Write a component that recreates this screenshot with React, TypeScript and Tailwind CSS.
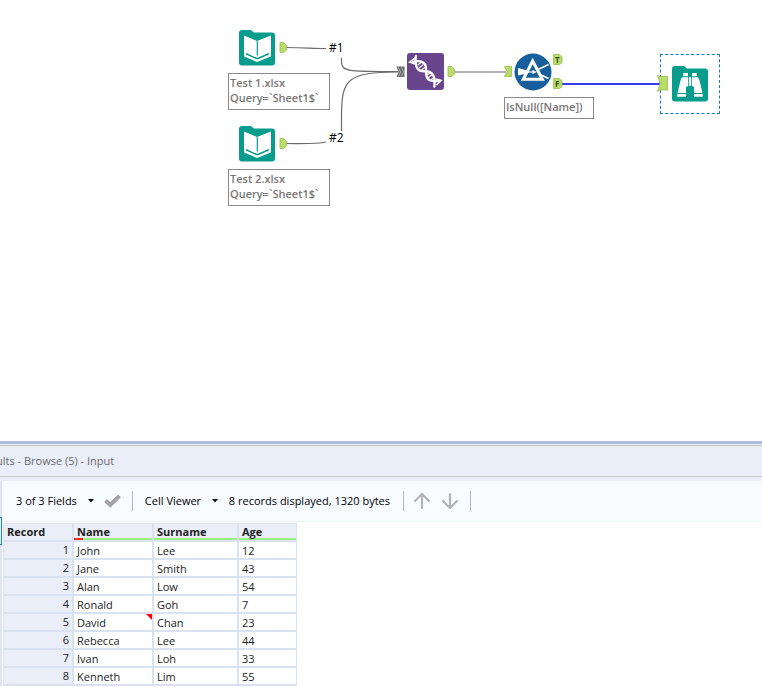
import type { ReactNode } from "react";
import { ArrowDown, ArrowUp } from "lucide-react";

type Person = { name: string; surname: string; age: number; flagged?: boolean };

const people: Person[] = [
  { name: "John", surname: "Lee", age: 12 },
  { name: "Jane", surname: "Smith", age: 43 },
  { name: "Alan", surname: "Low", age: 54 },
  { name: "Ronald", surname: "Goh", age: 7 },
  { name: "David", surname: "Chan", age: 23, flagged: true },
  { name: "Rebecca", surname: "Lee", age: 44 },
  { name: "Ivan", surname: "Loh", age: 33 },
  { name: "Kenneth", surname: "Lim", age: 55 },
];

const FOLDER = "M3 0H12L15 2.5H33Q36 2.5 36 5.5V32.5Q36 35.5 33 35.5H3Q0 35.5 0 32.5V3Q0 0 3 0Z";

function InputIcon() {
  return (
    <svg width="36" height="36" viewBox="0 0 36 36" role="img" aria-label="Input Data">
      <path d={FOLDER} fill="#089c8c" />
      <path d="M5 5.5L18 11L32 5.5V26.5L18 32L5 26.5Z" fill="#fff" />
      <path d="M18.3 11V25.5" stroke="#089c8c" strokeWidth="1.2" />
      <path d="M7 23.8L18.3 28.8L30 23.8" fill="none" stroke="#089c8c" strokeWidth="1.5" />
    </svg>
  );
}

function UnionIcon() {
  return (
    <svg width="37" height="37" viewBox="0 0 37 37" role="img" aria-label="Union">
      <rect width="37" height="37" rx="3" fill="#68458c" />
      <g fill="none" stroke="#fff" strokeWidth="2.3" strokeLinecap="round">
        <path d="M9 3C7.8 8 8.5 15.8 13 17.6C15.5 18.6 17.5 18 20 18.4C26 19.3 28.4 23 27.4 33.6" />
        <path d="M5.5 9C12 6.8 18 8.5 18.8 13.5C19.4 18 17.8 25 22.8 27.3C25.8 28.7 29 28.2 32 27.8" />
      </g>
      <path d="M10.5 12.2L14 9.6M12 15L16.5 11.4M14.5 17L18 14.2M19.8 22.2L23.6 19.4M21 25L25.5 21.4M24 26.8L27 24.4" stroke="#fff" strokeWidth="1.2" />
      <path d="M8.2 4.8L2.5 9.2L8.4 11M28.6 26L34.2 27.4L29.4 32" fill="none" stroke="#fff" strokeWidth="1.5" />
    </svg>
  );
}

function FilterIcon() {
  return (
    <svg width="38" height="38" viewBox="0 0 38 38" role="img" aria-label="Filter">
      <circle cx="19" cy="19" r="18.5" fill="#175f9c" />
      <path d="M4 15L15 18V20L4 22.5Z" fill="#fff" />
      <path d="M22 17.5L34.5 11.5M23 20L34.5 25.5" stroke="#fff" strokeWidth="1.6" />
      <path d="M18.7 8L9.3 26.3H28.3Z" fill="#175f9c" stroke="#fff" strokeWidth="3" />
      <path d="M13.5 19H20" stroke="#fff" strokeWidth="1.2" />
      <path d="M18.5 16.8L22.5 19L18.5 21.2Z" fill="#fff" />
    </svg>
  );
}

function BrowseIcon() {
  return (
    <svg width="36" height="36" viewBox="0 0 36 36" role="img" aria-label="Browse">
      <path d={FOLDER} fill="#089c8c" />
      <g fill="#fff">
        <path d="M11.3 7H16V10.3H11.3ZM20 7H24.7V10.3H20Z" />
        <path d="M10.2 11.3H16V20L14 21V27H5.5L8.5 14.5Q9 12 10.2 11.3Z" />
        <path d="M25.8 11.3H20V20L22 21V27H30.5L27.5 14.5Q27 12 25.8 11.3Z" />
        <path d="M5.3 28H14V30.7H5.3ZM22 28H30.7V30.7H22ZM16.8 11.3H19.2V19.8H16.8Z" />
      </g>
    </svg>
  );
}

// Connector lines and the anchors they run between
function Wires() {
  return (
    <svg className="absolute left-0 top-0" width="762" height="220" aria-hidden="true">
      <g fill="none" stroke="#6b6b6b" strokeWidth="1.2">
        <path d="M286 47.5C305 47.5 312 48.5 326 48.5" />
        <path d="M286 143.5C305 143.5 318 144 326 142" />
        <path d="M341.5 58V62C341.5 72 350 71.5 398 71.5" />
        <path d="M341.5 131V116C341.5 78 348 72.5 398 72" />
      </g>
      <path d="M453 72H506" stroke="#9b9b9b" strokeWidth="1.6" />
      <path d="M561 84H660" stroke="#3838e8" strokeWidth="2" />
      <g fill="#b9dc6c" stroke="#97bd4a" strokeWidth="0.8">
        <path d="M280 42.5H283.5L286.5 45.5V50L283.5 52.5H280Z" />
        <path d="M280 138.5H283.5L286.5 141.5V146L283.5 148.5H280Z" />
        <path d="M448 66.5H451.5L454.5 69.5V74L451.5 76.5H448Z" />
        <path d="M504.5 66.5H511.5V76.5H504.5L507 71.5Z" />
        <path d="M553.5 54.5H559.5L562 57V62.5L559.5 64.5H553.5Z" />
        <path d="M553.5 78.5H559.5L562 81V86.5L559.5 88.5H553.5Z" />
        <path d="M657.5 75.5L660.5 76.5H667.5V90H660.5L657.5 91.5L660 83.5Z" />
      </g>
      <path d="M396.5 66.5H404.5V77H396.5L398.5 72Z" fill="#6c6c6c" />
      <path d="M398.5 67.5L400.5 72L398.5 76.5M401.5 67.5L403.5 72L401.5 76.5" fill="none" stroke="#c4c4c4" strokeWidth="0.8" />
    </svg>
  );
}

function Note({ className, children }: { className: string; children: ReactNode }) {
  return (
    <p className={`absolute whitespace-nowrap border border-[#8a8a8a] bg-white px-px text-[11px] font-semibold leading-[15px] text-[#777] ${className}`}>
      {children}
    </p>
  );
}

function Canvas() {
  return (
    <section aria-label="Workflow" className="relative h-[441px] shrink-0 overflow-hidden bg-white">
      <div className="absolute left-[660px] top-[54px] size-[60px] border border-dashed border-[#0f78d4]" />
      <Wires />
      <div className="absolute left-[239px] top-[30px]"><InputIcon /></div>
      <div className="absolute left-[239px] top-[126px]"><InputIcon /></div>
      <div className="absolute left-[407px] top-[53px]"><UnionIcon /></div>
      <div className="absolute left-[514px] top-[53px]"><FilterIcon /></div>
      <div className="absolute left-[672px] top-[66px]"><BrowseIcon /></div>
      <span className="absolute left-[329px] top-[40px] text-xs">#1</span>
      <span className="absolute left-[329px] top-[130px] text-xs">#2</span>
      <span className="absolute left-[555px] top-[55px] text-[8px] font-bold leading-[10px] text-[#35521c]">T</span>
      <span className="absolute left-[555px] top-[79px] text-[8px] font-bold leading-[10px] text-[#35521c]">F</span>
      <Note className="left-[228px] top-[73px] w-[102px] pb-1 pt-px">
        Test 1.xlsx<br />Query=`Sheet1$`
      </Note>
      <Note className="left-[228px] top-[169px] w-[102px] pb-1 pt-px">
        Test 2.xlsx<br />Query=`Sheet1$`
      </Note>
      <Note className="left-[504px] top-[97px] w-[90px] pb-1 pt-px">IsNull([Name])</Note>
    </section>
  );
}

function Caret() {
  return (
    <svg width="6" height="4" viewBox="0 0 6 4" aria-hidden="true">
      <path d="M0 0H6L3 3.5Z" fill="#111" />
    </svg>
  );
}

function Toolbar() {
  return (
    <div className="flex h-[41px] items-center border-b border-[#eef1f8] bg-[#f8fbff] pl-[14px] text-[11px] text-black">
      <button type="button" aria-haspopup="menu" className="flex items-center gap-[11px] whitespace-nowrap">
        3 of 3 Fields
        <Caret />
      </button>
      <button type="button" aria-label="Apply" className="ml-[10px]">
        <svg width="17" height="14" viewBox="0 0 17 14">
          <path d="M1.5 6.5L6.3 11L15.5 1.8" fill="none" stroke="#a3a3a3" strokeWidth="4" />
        </svg>
      </button>
      <span className="ml-[11px] h-5 w-px bg-[#b8b8b8]" />
      <div className="relative ml-3 flex items-center">
        <select aria-label="Viewer" className="appearance-none bg-transparent pr-4">
          <option>Cell Viewer</option>
        </select>
        <span className="pointer-events-none absolute right-0"><Caret /></span>
      </div>
      <span className="ml-[11px] whitespace-nowrap">8 records displayed, 1320 bytes</span>
      <span className="ml-[13px] h-5 w-px bg-[#b8b8b8]" />
      <button type="button" aria-label="Previous" className="ml-[6px]">
        <ArrowUp size={24} strokeWidth={2.2} color="#b3b3b3" />
      </button>
      <button type="button" aria-label="Next" className="ml-1">
        <ArrowDown size={24} strokeWidth={2.2} color="#b3b3b3" />
      </button>
      <span className="ml-2 h-5 w-px bg-[#b8b8b8]" />
    </div>
  );
}

function HeadCell({ children, quality }: { children: ReactNode; quality?: "ok" | "mixed" }) {
  return (
    <th scope="col" className="border-b-2 border-r-2 border-[#dae1f0] bg-[#e9eef9] p-0 text-left font-bold last:border-r">
      <div className="h-[14px] pl-[3px] leading-4">{children}</div>
      <div className={quality ? "flex h-[2px] bg-[#98f57d]" : "h-[2px]"}>
        {quality === "mixed" && <span className="w-[9px] bg-[#f52c2c]" />}
      </div>
    </th>
  );
}

function Cell({ children, flagged }: { children: ReactNode; flagged?: boolean }) {
  return (
    <td className="relative h-[18px] border-b-2 border-r-2 border-[#dae1f0] bg-white p-0 pl-[3px] last:border-r">
      <div className="h-4 leading-[18px]">{children}</div>
      {flagged && (
        <svg className="absolute right-0 top-0" width="6" height="6" aria-hidden="true">
          <path d="M0 0H6V6Z" fill="#f00" />
        </svg>
      )}
    </td>
  );
}

function Results() {
  return (
    <section aria-label="Results" className="border-t-[3px] border-[#abbfe1] bg-[#eaeef9]">
      <h2 className="mt-px flex h-8 items-center whitespace-nowrap border-y border-[#c4c5c9] text-[11px] text-[#6b6b6b]">
        <span className="-ml-1">ults - Browse (5) - Input</span>
      </h2>
      <div className="mt-1 flex">
        <div className="w-[2px] shrink-0 bg-[#dfe4f2] pt-9">
          <div className="h-7 border-y border-r border-[#1682d8] bg-[#eaeef9]" />
        </div>
        <div className="min-w-0 flex-1 bg-white">
          <Toolbar />
          <table className="ml-px mt-px w-[294px] table-fixed border-separate border-spacing-0 border-l border-t border-[#dae1f0] text-[11px] text-[#222]">
            <colgroup>
              <col className="w-[70px]" />
              <col className="w-[80px]" />
              <col className="w-[85px]" />
              <col />
            </colgroup>
            <thead>
              <tr>
                <HeadCell>Record</HeadCell>
                <HeadCell quality="mixed">Name</HeadCell>
                <HeadCell quality="ok">Surname</HeadCell>
                <HeadCell quality="ok">Age</HeadCell>
              </tr>
            </thead>
            <tbody>
              {people.map((person, i) => (
                <tr key={person.name}>
                  <th scope="row" className="border-b-2 border-r-2 border-[#dae1f0] bg-[#e9eef9] p-0 pr-[3px] text-right font-normal leading-4">
                    {i + 1}
                  </th>
                  <Cell flagged={person.flagged}>{person.name}</Cell>
                  <Cell>{person.surname}</Cell>
                  <Cell>{person.age}</Cell>
                </tr>
              ))}
            </tbody>
          </table>
        </div>
      </div>
    </section>
  );
}

export default function App() {
  return (
    <main className="flex h-screen flex-col overflow-hidden bg-white font-['Open_Sans','Noto_Sans',sans-serif] text-black">
      <Canvas />
      <Results />
    </main>
  );
}
